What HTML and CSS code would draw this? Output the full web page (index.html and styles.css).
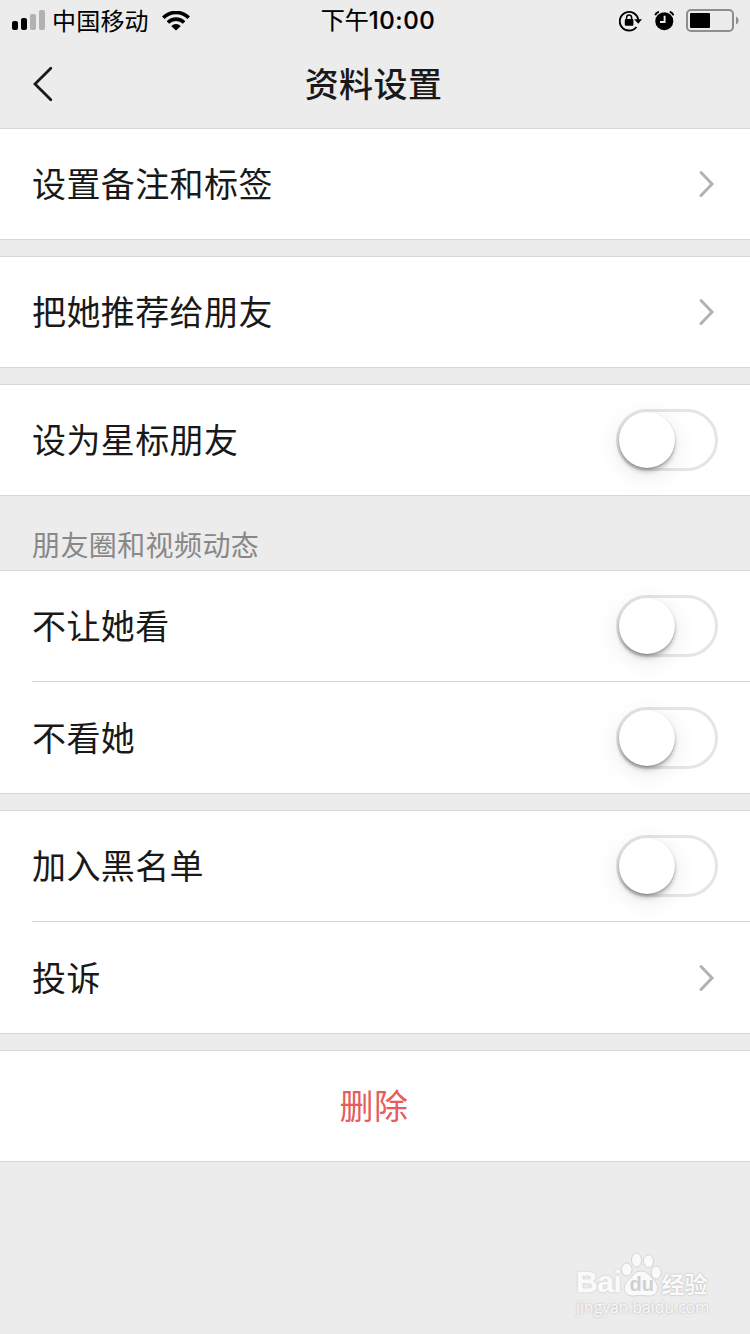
FILE: index.html
```html
<!DOCTYPE html>
<html lang="zh-CN">
<head>
    <meta charset="UTF-8">
    <meta name="viewport" content="width=device-width, initial-scale=1.0">
    <title>资料设置</title>
    <link rel="stylesheet" href="styles.css">
</head>
<body>
    <header class="header">
        <div class="status-bar">
            <div class="status-left">
                <svg class="signal" width="34" height="22" viewBox="0 0 34 22">
                    <rect x="0" y="11" width="6" height="9" rx="2" fill="#000"/>
                    <rect x="9" y="8" width="6" height="12" rx="2" fill="#000"/>
                    <rect x="18" y="4" width="6" height="16" rx="2" fill="#b2b2b2"/>
                    <rect x="27" y="0" width="6" height="20" rx="2" fill="#b2b2b2"/>
                </svg>
                <span class="carrier">中国移动</span>
                <svg class="wifi" width="28" height="20" viewBox="0 0 28 20">
                    <g fill="none" stroke="#000" stroke-width="3.6">
                        <path d="M1.3 6.7a18 18 0 0 1 25.4 0"/>
                        <path d="M5.9 11.5a11.4 11.4 0 0 1 16.2 0"/>
                    </g>
                    <path d="M9.2 15.1a6.8 6.8 0 0 1 9.6 0L14 19.6z"/>
                </svg>
            </div>
            <div class="clock">下午<span>10:00</span></div>
            <div class="status-right">
                <svg width="24" height="22" viewBox="0 0 24 22">
                    <path d="M17.4 17A9.3 9.3 0 1 1 19.3 10" fill="none" stroke="#000" stroke-width="1.9"/>
                    <path d="M15.2 9.3h7.8l-3.8 4.4z"/>
                    <rect x="5.8" y="9" width="8.6" height="6.8" rx="1"/>
                    <path d="M7.6 9.5V7.4a2.5 2.5 0 0 1 5 0v2.1" fill="none" stroke="#000" stroke-width="1.5"/>
                </svg>
                <svg class="alarm" width="20" height="20" viewBox="0 0 20 20">
                    <circle cx="10.3" cy="10.2" r="9"/>
                    <path d="M1.2 4.3A5 5 0 0 1 4.9.8M19.4 4.3A5 5 0 0 0 15.7.8" fill="none" stroke="#000" stroke-width="1.9"/>
                    <path d="M10.6 4.8v6.2H6" fill="none" stroke="#ececec" stroke-width="1.9"/>
                </svg>
                <svg class="battery" width="53" height="24" viewBox="0 0 53 24">
                    <rect x="1" y="1" width="46" height="21" rx="4" fill="none" stroke="#8e8e8e" stroke-width="2"/>
                    <rect x="4" y="4" width="20" height="15" rx="1"/>
                    <path d="M50 7.5c3.4 1.6 3.4 6.4 0 8z" fill="#8e8e8e"/>
                </svg>
            </div>
        </div>
        <div class="nav-bar">
            <svg class="back" width="22" height="36" viewBox="0 0 22 36">
                <path d="M18.8 2.3L3 18l15.8 15.7" fill="none" stroke="#191919" stroke-width="2.8" stroke-linecap="round"/>
            </svg>
            <h1>资料设置</h1>
        </div>
    </header>

    <main>
        <section class="group">
            <div class="row">
                <span>设置备注和标签</span>
                <svg class="arrow" width="20" height="28" viewBox="0 0 20 28"><path d="M3 2.5L14 14 3 25.5"/></svg>
            </div>
        </section>
        <section class="group">
            <div class="row">
                <span>把她推荐给朋友</span>
                <svg class="arrow" width="20" height="28" viewBox="0 0 20 28"><path d="M3 2.5L14 14 3 25.5"/></svg>
            </div>
        </section>
        <section class="group">
            <div class="row">
                <span>设为星标朋友</span>
                <div class="switch"><div class="knob"></div></div>
            </div>
        </section>

        <h2 class="group-title">朋友圈和视频动态</h2>
        <section class="group">
            <div class="row">
                <span>不让她看</span>
                <div class="switch"><div class="knob"></div></div>
            </div>
            <div class="row">
                <span>不看她</span>
                <div class="switch"><div class="knob"></div></div>
            </div>
        </section>
        <section class="group">
            <div class="row">
                <span>加入黑名单</span>
                <div class="switch"><div class="knob"></div></div>
            </div>
            <div class="row">
                <span>投诉</span>
                <svg class="arrow" width="20" height="28" viewBox="0 0 20 28"><path d="M3 2.5L14 14 3 25.5"/></svg>
            </div>
        </section>
        <section class="group">
            <div class="row delete"><span>删除</span></div>
        </section>
    </main>

    <footer class="watermark">
        <div class="logo">
            <span class="bai">Bai</span>
            <div class="paw">
                <svg width="42" height="46" viewBox="0 0 42 46">
                    <ellipse cx="5.8" cy="18.5" rx="5.2" ry="6.5"/>
                    <ellipse cx="15.5" cy="9" rx="5" ry="7"/>
                    <ellipse cx="27.5" cy="10.2" rx="5" ry="6.5"/>
                    <ellipse cx="35.2" cy="21.5" rx="5" ry="6.5"/>
                    <path d="M20 20c6 0 8 4 12 8 8.500 8 4.500 17-4 17-3 0-5-.6-8-.6s-5 .6-8 .6c-9 0-12-9-4.500-16 5-5 6.500-9 12.500-9z"/>
                </svg>
                <span class="du">du</span>
            </div>
            <span class="jingyan">经验</span>
        </div>
        <div class="site">jingyan.baidu.com</div>
    </footer>
</body>
</html>
```
FILE: styles.css
```css
* {
    box-sizing: border-box;
}
body {
    margin: 0;
    height: 1334px;
    display: flex;
    flex-direction: column;
    background: #ececec;
    color: #191919;
    font-family: "Noto Sans CJK SC", sans-serif;
    overflow: hidden;
}
svg {
    display: block;
    flex-shrink: 0;
}
.header {
    height: 128px;
}
.status-bar {
    height: 40px;
    padding: 0 11px 0 12px;
    display: grid;
    grid-template-columns: 1fr auto 1fr;
    align-items: center;
    color: #000;
    font-size: 24px;
    line-height: 40px;
}
.status-left,
.status-right {
    display: flex;
    align-items: center;
}
.status-right {
    justify-content: flex-end;
}
.carrier {
    margin-left: 6px;
    padding-bottom: 2px;
    letter-spacing: 0.2px;
    line-height: 38px;
}
.wifi {
    margin-left: 13px;
}
.clock {
    padding: 0 0 2px 5px;
    line-height: 38px;
    -webkit-text-stroke: 0.2px #000;
}
.clock span {
    font-family: Inter, sans-serif;
    font-weight: 500;
    font-size: 24px;
    letter-spacing: 0.6px;
}
.alarm {
    margin: 0 12px 0 11px;
}
.nav-bar {
    height: 88px;
    display: grid;
    grid-template-columns: 1fr auto 1fr;
    align-items: center;
}
.back {
    margin-left: 32px;
}
.nav-bar h1 {
    margin: 0;
    padding: 0 3px 2px 0;
    font-size: 34px;
    font-weight: 500;
    line-height: 48px;
    letter-spacing: 0.4px;
}
.group {
    background: #fff;
    border-top: 1px solid #d6d6d6;
    border-bottom: 1px solid #d6d6d6;
    margin-bottom: 16px;
}
.row {
    height: 110px;
    padding: 0 32px;
    display: flex;
    align-items: center;
    justify-content: space-between;
    font-size: 34px;
    line-height: 48px;
    letter-spacing: 0.4px;
}
.row span {
    padding-bottom: 2px;
}
.row + .row {
    height: 112px;
    margin-left: 32px;
    padding-left: 0;
    border-top: 1px solid #d6d6d6;
}
.arrow {
    fill: none;
    stroke: #b2b2b2;
    stroke-width: 3;
    stroke-linecap: round;
}
.switch {
    width: 102px;
    height: 62px;
    border: 3px solid #e5e5e5;
    border-radius: 31px;
}
.knob {
    width: 56px;
    height: 56px;
    border-radius: 50%;
    background: #fff;
    box-shadow: 0 4px 4px rgba(0, 0, 0, 0.2), 0 1px 2px rgba(0, 0, 0, 0.25), 0 6px 24px rgba(0, 0, 0, 0.1);
}
.group-title {
    margin: -16px 0 0;
    height: 74px;
    padding: 28px 32px 0;
    color: #888;
    font-size: 28px;
    font-weight: 400;
    line-height: 40px;
    letter-spacing: 0.4px;
}
.row.delete {
    justify-content: center;
    padding-right: 34px;
    color: #e85c59;
}
.watermark {
    margin: auto 38px 18px auto;
    width: 136px;
    color: #fafafa;
    text-shadow: 0 0 2px #aaa;
}
.logo {
    display: flex;
    align-items: flex-end;
    height: 46px;
    margin-bottom: 2px;
}
.bai {
    font: bold 30px/30px "Liberation Sans", sans-serif;
    letter-spacing: -0.4px;
    -webkit-text-stroke: 0.5px #fafafa;
}
.paw {
    position: relative;
    margin-left: -1px;
}
.paw svg {
    fill: #fafafa;
    stroke: #d4d4d4;
    stroke-width: 1;
}
.du {
    position: absolute;
    left: 9px;
    bottom: 2px;
    color: #d0d0d0;
    text-shadow: none;
    font: bold 20px/22px "Liberation Sans", sans-serif;
}
.jingyan {
    margin-left: -1px;
    font-size: 23px;
    font-weight: 700;
    line-height: 28px;
}
.site {
    font: 15.5px/17px "Open Sans", sans-serif;
    letter-spacing: 0.1px;
}
```
